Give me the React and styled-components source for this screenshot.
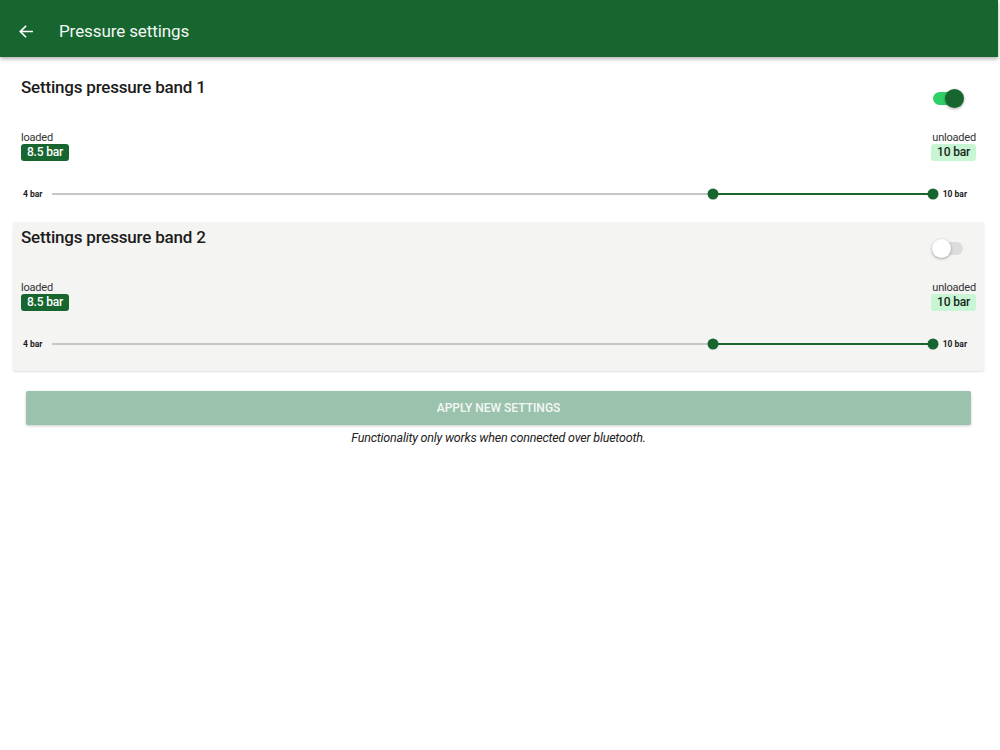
import React, { useState } from 'react'
import styled, { createGlobalStyle } from 'styled-components'

const GlobalStyle = createGlobalStyle`
	html, body {
		margin: 0;
		padding: 0;
		background: #ffffff;
		font-family: Roboto, "Liberation Sans", sans-serif;
		color: #1a1a1a;
	}
`

const bands = [
	{ id: 1, on: true, shaded: false },
	{ id: 2, on: false, shaded: true },
]

const ArrowIcon = () => (
	<svg width="15" height="15" viewBox="0 0 16 16">
		<path
			d="M15 8H2.5M8 2.5L2.5 8L8 13.5"
			fill="none"
			stroke="#ffffff"
			strokeWidth="1.8"
			strokeLinecap="square"
		/>
	</svg>
)

const Band = ({ id, on, shaded }) => {
	const [ enabled, setEnabled ] = useState(on)
	const min = 4
	const max = 10
	const low = 8.5
	const high = 10
	const lowPct = (low - min) / (max - min) * 100
	const highPct = (high - min) / (max - min) * 100

	return (
		<Card shaded={shaded}>
			<CardHead>
				<CardTitle>Settings pressure band {id}</CardTitle>
				<Switch on={enabled} onClick={() => setEnabled(!enabled)}>
					<Knob on={enabled} />
				</Switch>
			</CardHead>
			<Values>
				<Value>
					<ValueLabel>loaded</ValueLabel>
					<Badge>{low} bar</Badge>
				</Value>
				<Value right>
					<ValueLabel>unloaded</ValueLabel>
					<Badge light>{high} bar</Badge>
				</Value>
			</Values>
			<SliderRow>
				<Tick>{min} bar</Tick>
				<Track>
					<Fill style={{ left: `${lowPct}%`, width: `${highPct - lowPct}%` }} />
					<Thumb style={{ left: `${lowPct}%` }} />
					<Thumb style={{ left: `${highPct}%` }} />
				</Track>
				<Tick>{max} bar</Tick>
			</SliderRow>
		</Card>
	)
}

const App = () => (
	<Page>
		<GlobalStyle />
		<AppBar>
			<ArrowIcon />
			<BarTitle>Pressure settings</BarTitle>
		</AppBar>
		<Content>
			{bands.map((band) => <Band key={band.id} {...band} />)}
			<Actions>
				<ApplyButton disabled>APPLY NEW SETTINGS</ApplyButton>
				<Note>Functionality only works when connected over bluetooth.</Note>
			</Actions>
		</Content>
	</Page>
)

const Page = styled.div`
	width: 1000px;
	min-height: 750px;
	background: #ffffff;
`

const AppBar = styled.header`
	height: 57px;
	width: 998px;
	background: #17662f;
	box-shadow: 0 2px 4px rgba(0, 0, 0, 0.3);
	display: flex;
	align-items: center;
	padding: 5px 0 0 18px;
	box-sizing: border-box;
	gap: 26px;
	position: relative;
	z-index: 1;
`

const BarTitle = styled.h1`
	margin: 0;
	font-size: 17px;
	font-weight: 400;
	color: #f2f7f3;
	letter-spacing: -0.1px;
`

const Content = styled.main`
	padding: 15px 16px 0 13px;
	display: flex;
	flex-direction: column;
	gap: 1px;
`

const Card = styled.section`
	height: 149px;
	box-sizing: border-box;
	padding: 0 8px;
	background: ${(p) => (p.shaded ? '#f4f4f3' : '#ffffff')};
	box-shadow: ${(p) => (p.shaded ? '0 1px 2px rgba(0, 0, 0, 0.12)' : 'none')};
	border-radius: 2px;
	display: flex;
	flex-direction: column;
`

const CardHead = styled.div`
	display: flex;
	justify-content: space-between;
	align-items: flex-start;
	height: 46px;
`

const CardTitle = styled.h2`
	margin: 4px 0 0;
	font-size: 17px;
	line-height: 22px;
	font-weight: 500;
	color: #1c1c1c;
	letter-spacing: -0.2px;
`

const Switch = styled.div`
	position: relative;
	width: 30px;
	height: 13px;
	margin: 20px 13px 0 0;
	border-radius: 7px;
	background: ${(p) => (p.on ? '#2fd067' : '#dcdcdc')};
	cursor: pointer;
`

const Knob = styled.span`
	position: absolute;
	top: -3px;
	left: ${(p) => (p.on ? '12px' : '-1px')};
	width: 19px;
	height: 19px;
	border-radius: 50%;
	background: ${(p) => (p.on ? '#17662f' : '#ffffff')};
	box-shadow: 0 1px 3px rgba(0, 0, 0, 0.35);
`

const Values = styled.div`
	display: flex;
	justify-content: space-between;
	height: 52px;
	padding-top: 13px;
	box-sizing: border-box;
`

const Value = styled.div`
	display: flex;
	flex-direction: column;
	align-items: ${(p) => (p.right ? 'flex-end' : 'flex-start')};
`

const ValueLabel = styled.span`
	font-size: 11px;
	line-height: 13px;
	color: #333333;
	letter-spacing: -0.2px;
`

const Badge = styled.span`
	height: 17px;
	padding: 0 6px;
	border-radius: 3px;
	font-size: 12px;
	line-height: 17px;
	font-weight: 500;
	letter-spacing: -0.2px;
	background: ${(p) => (p.light ? '#c8f5d3' : '#17662f')};
	color: ${(p) => (p.light ? '#16281b' : '#ffffff')};
`

const SliderRow = styled.div`
	display: flex;
	align-items: center;
	gap: 10px;
	padding: 0 9px 0 2px;
	height: 26px;
	margin-top: 11px;
`

const Tick = styled.span`
	font-size: 8.5px;
	font-weight: 700;
	color: #1c1c1c;
	white-space: nowrap;
`

const Track = styled.div`
	position: relative;
	flex: 1;
	height: 2px;
	background: #c6c6c6;
`

const Fill = styled.div`
	position: absolute;
	top: 0;
	height: 2px;
	background: #17662f;
`

const Thumb = styled.span`
	position: absolute;
	top: 1px;
	width: 11px;
	height: 11px;
	border-radius: 50%;
	background: #17662f;
	transform: translate(-50%, -50%);
`

const Actions = styled.div`
	display: flex;
	flex-direction: column;
	align-items: center;
	padding-top: 19px;
`

const ApplyButton = styled.button`
	width: 945px;
	height: 34px;
	border: none;
	border-radius: 2px;
	background: #9bc2ad;
	color: #f4f8f5;
	font-family: Roboto, "Liberation Sans", sans-serif;
	font-size: 12px;
	font-weight: 500;
	box-shadow: 0 1px 3px rgba(0, 0, 0, 0.2);
`

const Note = styled.p`
	margin: 5px 0 0;
	font-size: 12.5px;
	font-style: italic;
	color: #222222;
	letter-spacing: -0.2px;
`

export default App
